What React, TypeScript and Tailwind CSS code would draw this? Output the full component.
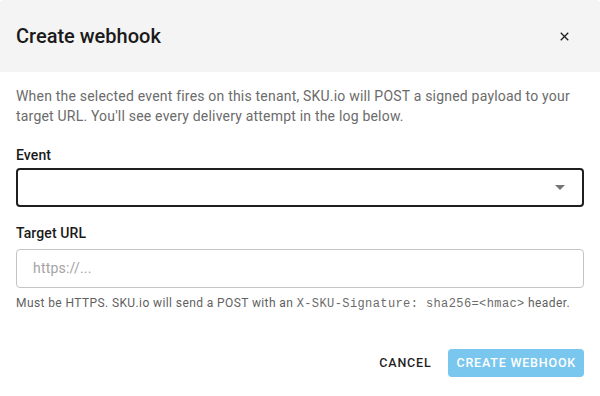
export default function App() {
  return (
    <div className="h-[396px] w-[600px] overflow-hidden rounded-[4px] bg-white font-['Roboto',sans-serif] text-[#212121]">
      {/* Header */}
      <div className="flex h-[72px] items-center justify-between bg-[#f4f4f4] px-4">
        <h2 className="text-[20px] font-medium text-[#1a1a1a]">Create webhook</h2>
        <button className="mr-[8px] flex h-6 w-6 items-center justify-center text-[#1a1a1a]">
          <svg viewBox="0 0 24 24" className="h-[15px] w-[15px]" fill="none" stroke="currentColor" strokeWidth={2}>
            <path d="M6 6l12 12M18 6L6 18" />
          </svg>
        </button>
      </div>

      {/* Body */}
      <div className="px-4 pt-[14px]">
        <p className="text-[14px] leading-[20px] tracking-[0.2px] text-[#6b6b6b]">
          When the selected event fires on this tenant, SKU.io will POST a signed payload to your target URL. You'll see every delivery attempt in the log below.
        </p>

        <label className="mt-[19px] block text-[14px] font-medium leading-[20px] tracking-[0.1px] text-[#1a1a1a]">Event</label>
        <div className="mt-[3px] flex h-[39px] items-center justify-end rounded-[4px] border-2 border-[#1f1f1f] pr-[17px]">
          <svg viewBox="0 0 10 5" className="h-[5px] w-[10px]" fill="#757575">
            <path d="M0 0h10L5 5z" />
          </svg>
        </div>

        <label className="mt-[16px] block text-[14px] font-medium leading-[20px] tracking-[0.1px] text-[#1a1a1a]">Target URL</label>
        <div className="mt-[6px] flex h-[39px] items-center rounded-[4px] border border-[#c4c4c4] px-4">
          <span className="text-[14px] tracking-[0.2px] text-[#a3a3a3]">https://...</span>
        </div>
        <p className="mt-[7px] text-[12px] leading-[16px] tracking-[0.4px] text-[#5f5f5f]">
          Must be HTTPS. SKU.io will send a POST with an{" "}
          <code className="font-['Liberation_Mono',monospace] text-[12px] tracking-[0.4px] text-[#6b6b6b]">X-SKU-Signature: sha256=&lt;hmac&gt;</code> header.
        </p>
      </div>

      {/* Footer */}
      <div className="mt-[36px] flex items-center justify-end gap-[9px] px-4">
        <button className="px-2 py-[6px] text-[12.5px] font-medium uppercase tracking-[0.8px] text-[#1f1f1f]">Cancel</button>
        <button className="h-[28px] rounded-[4px] bg-[#79c6ee] px-[8px] text-[12.5px] font-medium uppercase tracking-[0.8px] text-white">
          Create webhook
        </button>
      </div>
    </div>
  );
}
